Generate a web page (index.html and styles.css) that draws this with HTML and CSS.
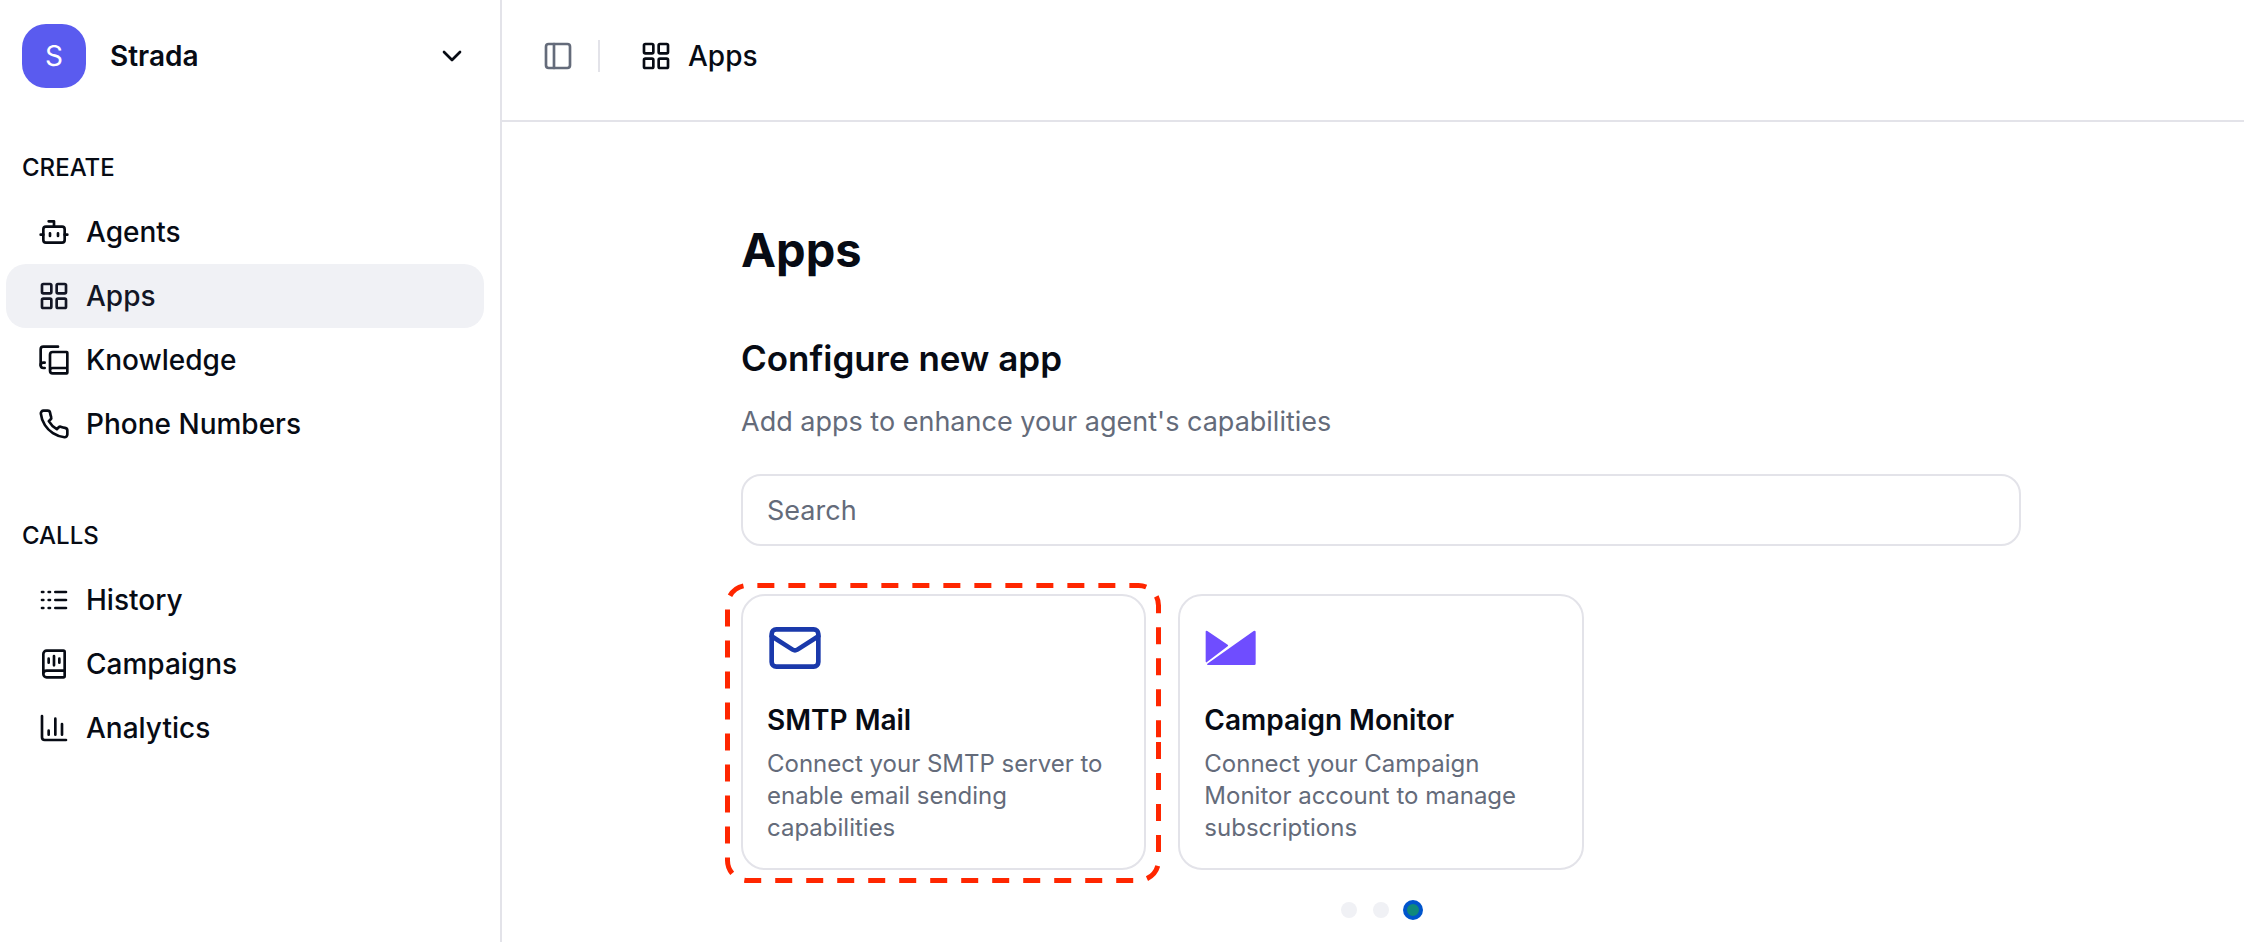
FILE: index.html
```html
<!DOCTYPE html>
<html lang="en">
<head>
    <meta charset="UTF-8">
    <meta name="viewport" content="width=device-width, initial-scale=1.0">
    <title>Apps - Strada</title>
    <link rel="stylesheet" href="styles.css">
</head>
<body>
    <div class="layout">
        <aside class="sidebar">
            <button class="workspace" type="button">
                <span class="avatar">S</span>
                <span class="workspace-name">Strada</span>
                <svg class="icon" viewBox="0 0 24 24"><path d="m6 9 6 6 6-6"/></svg>
            </button>

            <nav class="nav-group" aria-labelledby="nav-create">
                <h2 class="nav-label" id="nav-create">CREATE</h2>
                <a class="nav-item" href="#agents">
                    <svg class="icon" viewBox="0 0 24 24"><path d="M12 8V4H8"/><rect x="4" y="8" width="16" height="12" rx="2"/><path d="M2 14h2M20 14h2M15 13v2M9 13v2"/></svg>
                    Agents
                </a>
                <a class="nav-item active" href="#apps" aria-current="page">
                    <svg class="icon" viewBox="0 0 24 24"><rect x="3" y="3" width="7" height="7" rx="1"/><rect x="14" y="3" width="7" height="7" rx="1"/><rect x="14" y="14" width="7" height="7" rx="1"/><rect x="3" y="14" width="7" height="7" rx="1"/></svg>
                    Apps
                </a>
                <a class="nav-item" href="#knowledge">
                    <svg class="icon" viewBox="0 0 24 24"><path d="M2 16V4a2 2 0 0 1 2-2h11"/><path d="M22 18H11a2 2 0 1 0 0 4h10.5a.5.5 0 0 0 .5-.5v-15a.5.5 0 0 0-.5-.5H11a2 2 0 0 0-2 2v12"/><path d="M5 14H4a2 2 0 1 0 0 4h1"/></svg>
                    Knowledge
                </a>
                <a class="nav-item" href="#phone-numbers">
                    <svg class="icon" viewBox="0 0 24 24"><path d="M22 16.92v3a2 2 0 0 1-2.18 2 19.79 19.79 0 0 1-8.63-3.07 19.5 19.5 0 0 1-6-6 19.79 19.79 0 0 1-3.07-8.67A2 2 0 0 1 4.11 2h3a2 2 0 0 1 2 1.72 12.84 12.84 0 0 0 .7 2.81 2 2 0 0 1-.45 2.11L8.09 9.91a16 16 0 0 0 6 6l1.27-1.27a2 2 0 0 1 2.11-.45 12.84 12.84 0 0 0 2.81.7A2 2 0 0 1 22 16.92z"/></svg>
                    Phone Numbers
                </a>
            </nav>

            <nav class="nav-group" aria-labelledby="nav-calls">
                <h2 class="nav-label" id="nav-calls">CALLS</h2>
                <a class="nav-item" href="#history">
                    <svg class="icon" viewBox="0 0 24 24"><path d="M13 6h8M13 12h8M13 18h8M3 6h1M3 12h1M3 18h1M8 6h1M8 12h1M8 18h1"/></svg>
                    History
                </a>
                <a class="nav-item" href="#campaigns">
                    <svg class="icon" viewBox="0 0 24 24"><path d="M12 6v7M16 8v3M8 8v3"/><path d="M4 19.5v-15A2.5 2.5 0 0 1 6.5 2H19a1 1 0 0 1 1 1v18a1 1 0 0 1-1 1H6.5a1 1 0 0 1 0-5H20"/></svg>
                    Campaigns
                </a>
                <a class="nav-item" href="#analytics">
                    <svg class="icon" viewBox="0 0 24 24"><path d="M3 3v16a2 2 0 0 0 2 2h16"/><path d="M18 17V9M13 17V5M8 17v-3"/></svg>
                    Analytics
                </a>
            </nav>
        </aside>

        <div class="page">
            <header class="topbar">
                <button class="toggle" type="button" aria-label="Toggle sidebar">
                    <svg class="icon" viewBox="0 0 24 24"><rect x="3" y="3" width="18" height="18" rx="2"/><path d="M9 3v18"/></svg>
                </button>
                <span class="separator"></span>
                <div class="breadcrumb">
                    <svg class="icon" viewBox="0 0 24 24"><rect x="3" y="3" width="7" height="7" rx="1"/><rect x="14" y="3" width="7" height="7" rx="1"/><rect x="14" y="14" width="7" height="7" rx="1"/><rect x="3" y="14" width="7" height="7" rx="1"/></svg>
                    Apps
                </div>
            </header>

            <main class="content">
                <div class="container">
                    <h1>Apps</h1>
                    <h2>Configure new app</h2>
                    <p class="subtitle">Add apps to enhance your agent's capabilities</p>
                    <input class="search" type="text" placeholder="Search" aria-label="Search">

                    <div class="cards">
                        <a class="card" href="#smtp-mail">
                            <svg class="card-icon mail" viewBox="0 0 24 24"><rect x="2" y="4" width="20" height="16" rx="2"/><path d="m22 7-8.97 5.7a1.94 1.94 0 0 1-2.06 0L2 7"/></svg>
                            <h3>SMTP Mail</h3>
                            <p>Connect your SMTP server to enable email sending capabilities</p>
                            <svg class="highlight" viewBox="0 0 436 300"><path d="M433.5 159v118.5a20 20 0 0 1-20 20h-391a20 20 0 0 1-20-20v-255a20 20 0 0 1 20-20h391a20 20 0 0 1 20 20V159"/></svg>
                        </a>
                        <a class="card" href="#campaign-monitor">
                            <svg class="card-icon" viewBox="0 0 168 168"><path fill="#6f4dff" d="M5 35q0-5 5-2l61 41q3 2 0 5L9 126q-4 3-4-2zM149 33q6-2 6 3v95q0 4-4 4H12q-5 0-2-4z"/></svg>
                            <h3>Campaign Monitor</h3>
                            <p>Connect your Campaign Monitor account to manage subscriptions</p>
                        </a>
                    </div>

                    <div class="dots">
                        <button class="dot" type="button" aria-label="Page 1"></button>
                        <button class="dot" type="button" aria-label="Page 2"></button>
                        <button class="dot current" type="button" aria-label="Page 3"></button>
                    </div>
                </div>
            </main>
        </div>
    </div>
</body>
</html>
```
FILE: styles.css
```css
* {
    box-sizing: border-box;
}
body {
    margin: 0;
    font-family: Inter, "Liberation Sans", sans-serif;
    font-size: 28px;
    line-height: 40px;
    color: #070b14;
    background-color: #fff;
}
h1, h2, h3, p {
    margin: 0;
}
a {
    color: inherit;
    text-decoration: none;
}
button {
    font: inherit;
    color: inherit;
    background: none;
    border: 0;
    padding: 0;
    cursor: pointer;
}
.layout {
    display: flex;
    min-height: 100vh;
}
.icon {
    width: 32px;
    height: 32px;
    flex-shrink: 0;
    fill: none;
    stroke: currentColor;
    stroke-width: 2;
    stroke-linecap: round;
    stroke-linejoin: round;
}

/* sidebar */
.sidebar {
    width: 502px;
    flex-shrink: 0;
    padding: 24px 16px 24px 6px;
    border-right: 2px solid #e3e3e9;
}
.workspace {
    display: flex;
    align-items: center;
    gap: 24px;
    width: 100%;
    padding: 0 16px;
    text-align: left;
}
.avatar {
    width: 64px;
    height: 64px;
    border-radius: 24px;
    line-height: 64px;
    text-align: center;
    color: #fff;
    background-color: #5a5bef;
}
.workspace-name {
    flex: 1;
    font-weight: 600;
}
.nav-group {
    margin-top: 48px;
}
.nav-label {
    padding-left: 16px;
    font-size: 24px;
    font-weight: 500;
    line-height: 64px;
}
.nav-item {
    display: flex;
    align-items: center;
    gap: 16px;
    height: 64px;
    padding: 0 32px;
    border-radius: 20px;
    font-weight: 500;
}
.nav-item.active {
    color: #131625;
    background-color: #f0f1f5;
}

/* top bar */
.page {
    flex: 1;
    min-width: 0;
}
.topbar {
    display: flex;
    align-items: center;
    padding: 36px 40px 44px;
    border-bottom: 2px solid #e3e3e9;
}
.toggle {
    display: flex;
    color: #646b7a;
}
.separator {
    width: 2px;
    height: 32px;
    margin: 0 40px 0 24px;
    background-color: #e3e3e9;
}
.breadcrumb {
    display: flex;
    align-items: center;
    gap: 16px;
    font-weight: 500;
}

/* content */
.content {
    padding: 96px 0 16px 16px;
}
.container {
    max-width: 1280px;
    margin: 0 auto;
}
h1 {
    font-size: 47px;
    font-weight: 700;
    line-height: 64px;
}
.container h2 {
    margin-top: 48px;
    font-size: 35px;
    font-weight: 600;
    line-height: 56px;
}
.subtitle {
    margin-top: 16px;
    font-size: 27px;
    color: #646b7a;
}
.search {
    display: block;
    width: 100%;
    height: 72px;
    margin-top: 32px;
    padding: 0 24px;
    border: 2px solid #e3e3e9;
    border-radius: 20px;
    font: inherit;
    font-size: 27px;
    color: inherit;
    background-color: #fff;
}
.search::placeholder {
    color: #646b7a;
    opacity: 1;
}
.cards {
    display: grid;
    grid-template-columns: repeat(3, 1fr);
    gap: 32px;
    margin-top: 48px;
}
.card {
    position: relative;
    padding: 24px;
    border: 2px solid #e3e3e9;
    border-radius: 24px;
}
.card-icon {
    display: block;
    width: 56px;
    height: 56px;
}
.mail {
    fill: none;
    stroke: #1a39ab;
    stroke-width: 2;
    stroke-linecap: round;
    stroke-linejoin: round;
}
.card h3 {
    margin: 24px 0 8px;
    font-size: 28px;
    font-weight: 600;
}
.card p {
    font-size: 24px;
    line-height: 32px;
    color: #646b7a;
}
.highlight {
    position: absolute;
    top: -13px;
    left: -18px;
    width: 436px;
    height: 300px;
    fill: none;
    stroke: #ff2600;
    stroke-width: 5;
    stroke-dasharray: 17 14;
    pointer-events: none;
}
.dots {
    display: flex;
    justify-content: center;
    gap: 16px;
    margin-top: 32px;
}
.dot {
    width: 16px;
    height: 16px;
    border-radius: 50%;
    background-color: #f0f1f5;
}
.dot.current {
    background-color: #10897b;
    outline: 4px solid #0055cc;
    outline-offset: -2px;
}
```
